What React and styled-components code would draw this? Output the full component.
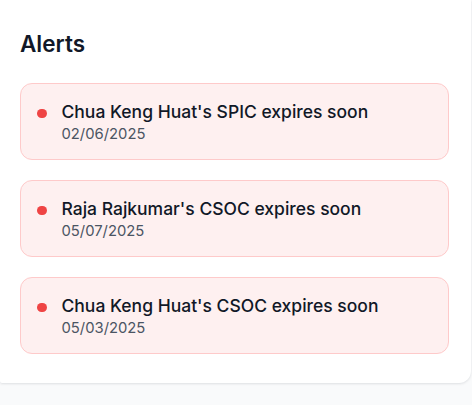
import React from 'react'
import styled, { createGlobalStyle } from 'styled-components'

const GlobalStyle = createGlobalStyle`
  html, body {
    margin: 0;
    padding: 0;
    background-color: #f9fafb;
    font-family: Inter, "Noto Sans", Arial, sans-serif;
  }
`

const Page = styled.div`
  width: 472px;
  height: 405px;
  overflow: hidden;
`

const Card = styled.section`
  width: 471px;
  box-sizing: border-box;
  background-color: #ffffff;
  padding: 30px 22px 29px 20px;
  border-bottom-right-radius: 12px;
  border-bottom-left-radius: 2px;
  box-shadow: 0 1px 3px rgba(15, 23, 42, 0.08), 0 1px 2px rgba(15, 23, 42, 0.04);
`

const Title = styled.h2`
  margin: 0 0 25px 0;
  font-size: 22.5px;
  line-height: 28px;
  font-weight: 600;
  color: #111827;
`

const List = styled.div`
  display: flex;
  flex-direction: column;
  gap: 20px;
`

const AlertBox = styled.div`
  display: flex;
  align-items: flex-start;
  gap: 15px;
  padding: 16px 16px 15px 16px;
  background-color: #fef0f0;
  border: 1px solid #fecaca;
  border-radius: 12px;
`

const Dot = styled.span`
  flex: none;
  width: 9.5px;
  height: 9.5px;
  margin-top: 8.5px;
  border-radius: 50%;
  background-color: #ef4444;
`

const Body = styled.div`
  display: flex;
  flex-direction: column;
`

const Message = styled.p`
  margin: 0;
  font-size: 17.5px;
  line-height: 24px;
  font-weight: 500;
  color: #111827;
`

const Date = styled.span`
  font-size: 14.8px;
  line-height: 20px;
  color: #4b5563;
`

const alerts = [
  { text: "Chua Keng Huat's SPIC expires soon", date: '02/06/2025' },
  { text: "Raja Rajkumar's CSOC expires soon", date: '05/07/2025' },
  { text: "Chua Keng Huat's CSOC expires soon", date: '05/03/2025' }
]

const App = () => {
  return (
    <Page>
      <GlobalStyle />
      <Card>
        <Title>Alerts</Title>
        <List>
          {alerts.map((alert, i) => (
            <AlertBox key={i}>
              <Dot />
              <Body>
                <Message>{alert.text}</Message>
                <Date>{alert.date}</Date>
              </Body>
            </AlertBox>
          ))}
        </List>
      </Card>
    </Page>
  )
}

export default App
